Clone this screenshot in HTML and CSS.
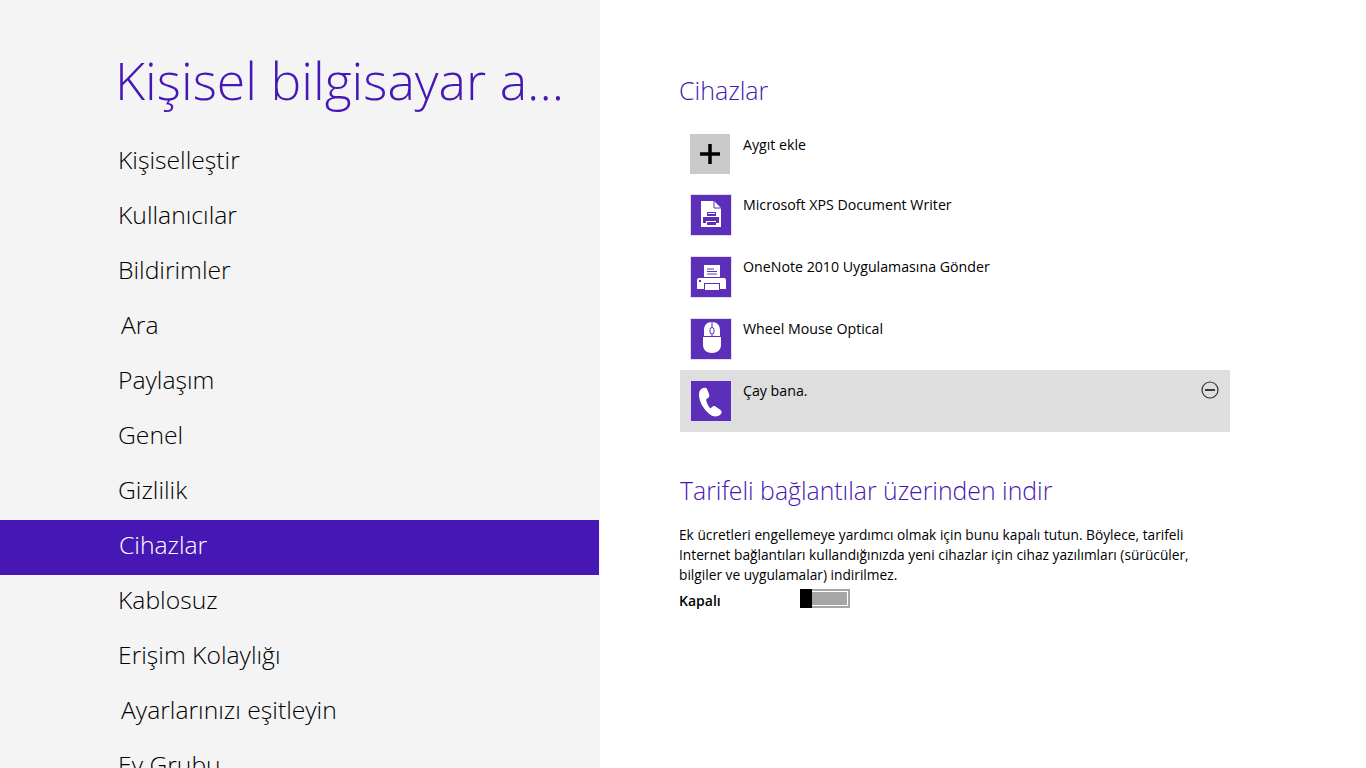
FILE: index.html
```html
<!DOCTYPE html>
<html lang="tr">
<head>
    <meta charset="UTF-8">
    <title>Bilgisayar ayarları</title>
    <link rel="stylesheet" href="styles.css">
</head>
<body>
    <!-- Left menu -->
    <nav class="sidebar">
        <h1 class="page-title">Kişisel bilgisayar a...</h1>
        <ul class="menu">
            <li>Kişiselleştir</li>
            <li>Kullanıcılar</li>
            <li>Bildirimler</li>
            <li class="indent">Ara</li>
            <li>Paylaşım</li>
            <li>Genel</li>
            <li>Gizlilik</li>
            <li class="active">Cihazlar</li>
            <li>Kablosuz</li>
            <li>Erişim Kolaylığı</li>
            <li class="indent">Ayarlarınızı eşitleyin</li>
            <li>Ev Grubu</li>
        </ul>
    </nav>

    <!-- Devices -->
    <main class="content">
        <h2 class="section-title">Cihazlar</h2>

        <div class="device add">
            <div class="tile tile-add">
                <svg width="40" height="40" viewBox="0 0 40 40"><path d="M20 10v20M10 20h20" stroke="#000" stroke-width="3.500" fill="none"/></svg>
            </div>
            <span class="device-name">Aygıt ekle</span>
        </div>

        <div class="device">
            <div class="tile">
                <svg width="40" height="40" viewBox="0 0 40 40">
                    <path d="M10 6h13l7 7v19h-20z" fill="#fff"/>
                    <path d="M23 6v7h7" fill="none" stroke="#5b2fb8" stroke-width="1"/>
                    <path d="M16 17h9v4h-9z M12 22h16v6h-3v-2h-10v2h-3z M16 27h9v3h-9z" fill="#5b2fb8"/>
                    <path d="M17 18h7v1h-7z" fill="#fff"/>
                </svg>
            </div>
            <span class="device-name">Microsoft XPS Document Writer</span>
        </div>

        <div class="device">
            <div class="tile">
                <svg width="40" height="40" viewBox="0 0 40 40">
                    <path d="M13 8h16v12h-16z" fill="#fff"/>
                    <path d="M16 12h7M16 14.500h10M16 17h10" stroke="#5b2fb8" stroke-width="1"/>
                    <path d="M8 21h25a2 2 0 0 1 2 2v9h-6v-6h-16v6h-7v-9a2 2 0 0 1 2-2z" fill="#fff"/>
                    <path d="M14 27h14v6h-14z" fill="#fff"/>
                    <path d="M8 23h2v2h-2z" fill="#5b2fb8"/>
                </svg>
            </div>
            <span class="device-name">OneNote 2010 Uygulamasına Gönder</span>
        </div>

        <div class="device">
            <div class="tile">
                <svg width="40" height="40" viewBox="0 0 40 40">
                    <path d="M21 3c-5 0-8 3-8 8v6h-1v9c0 5 4 8 9 8s9-3 9-8v-9h-1v-6c0-5-3-8-8-8z" fill="#fff"/>
                    <path d="M12 17.500h18M21 3v14" stroke="#5b2fb8" stroke-width="1" fill="none"/>
                    <rect x="19" y="8.500" width="4" height="6.500" rx="2" fill="#fff" stroke="#5b2fb8"/>
                </svg>
            </div>
            <span class="device-name">Wheel Mouse Optical</span>
        </div>

        <div class="device selected">
            <div class="tile">
                <svg width="40" height="40" viewBox="0 0 40 40">
                    <path d="M11 7.500c-2 1-3 3-3 6 0 8 5 15 11 20 3 2.500 8 2.500 10.500 0 1.500-1.500 1.500-3.500 0-4.500l-5-3.500c-1-.7-2.500-.5-3.500.5l-1.500 1.500c-2.500-2.500-4-6-4.500-9l2-1.500c1.500-1 1.500-2.500 1-4l-2-5c-.7-1.500-3-1.500-5-.500z" fill="#fff"/>
                </svg>
            </div>
            <span class="device-name">Çay bana.</span>
            <svg class="remove" width="18" height="18" viewBox="0 0 18 18">
                <circle cx="9" cy="9" r="8" fill="none" stroke="#333" stroke-width="1.200"/>
                <path d="M4 9h10" stroke="#000" stroke-width="1.500"/>
            </svg>
        </div>

        <h2 class="section-title metered">Tarifeli bağlantılar üzerinden indir</h2>
        <p class="description">Ek ücretleri engellemeye yardımcı olmak için bunu kapalı tutun. Böylece, tarifeli<br>Internet bağlantıları kullandığınızda yeni cihazlar için cihaz yazılımları (sürücüler,<br>bilgiler ve uygulamalar) indirilmez.</p>
        <div class="toggle-row">
            <span class="toggle-label">Kapalı</span>
            <div class="toggle"><div class="thumb"></div><div class="fill"></div></div>
        </div>
    </main>
</body>
</html>
```

FILE: styles.css
```css
/* General */
html, body {
    height: 768px;
    overflow: hidden;
}

body {
    margin: 0;
    display: flex;
    background: #fff;
    color: #000;
    font-family: 'Open Sans', 'Noto Sans', sans-serif;
}

/* Left menu */
.sidebar {
    width: 600px;
    height: 768px;
    flex-shrink: 0;
    overflow: hidden;
    background: #f4f4f5;
}

.page-title {
    margin: 0;
    height: 135px;
    padding: 46px 0 0 115px;
    box-sizing: border-box;
    font-size: 51.800px;
    line-height: 68px;
    font-weight: 300;
    color: #4617b4;
    white-space: nowrap;
}

.menu {
    margin: 0;
    padding: 0;
    list-style: none;
}

.menu li {
    width: 599px;
    height: 55px;
    padding-left: 118px;
    box-sizing: border-box;
    font-size: 24.700px;
    line-height: 50px;
    font-weight: 300;
    color: #000;
}

.menu li.indent {
    padding-left: 121px;
}

.menu li.active {
    padding-left: 119px;
    background: #4617b4;
    color: #fff;
}

/* Right side */
.content {
    flex: 1;
    padding: 72px 0 0 79px;
}

.section-title {
    margin: 0;
    font-size: 25px;
    line-height: 36px;
    font-weight: 300;
    color: #4617b4;
}

.device {
    width: 550px;
    height: 62px;
    margin-left: 1px;
    display: flex;
    padding: 11px 0 0 11px;
    box-sizing: border-box;
    position: relative;
}

.device.add {
    margin-top: 14px;
    padding-top: 12px;
}

.device.selected {
    background: #dedede;
}

.tile {
    width: 40px;
    height: 40px;
    background: #5b2fb8;
    outline: 1px solid #e4dcf5;
    flex-shrink: 0;
}

.tile svg {
    display: block;
}

.tile-add {
    margin: 0 1px 0 -1px;
    background: #c9c9c9;
    outline: none;
}

.device-name {
    margin-left: 12px;
    font-size: 14.200px;
    line-height: 19px;
    color: #000;
}

.add .device-name {
    margin-top: 1px;
}

.remove {
    position: absolute;
    top: 11px;
    right: 11px;
}

.section-title.metered {
    margin-top: 40px;
    padding-left: 1px;
    font-size: 24.800px;
}

.description {
    margin: 17px 0 0;
    font-size: 13.730px;
    line-height: 20px;
    color: #000;
}

.toggle-row {
    display: flex;
    align-items: center;
    margin-top: 3px;
    height: 20px;
}

.toggle-label {
    width: 121px;
    padding-top: 4px;
    font-size: 14px;
    font-weight: 600;
}

.toggle {
    width: 50px;
    height: 19px;
    display: flex;
    box-sizing: border-box;
    border: 2px solid #a6a6a6;
    border-left: none;
}

.thumb {
    width: 12px;
    height: 19px;
    margin-top: -2px;
    background: #000;
    flex-shrink: 0;
}

.fill {
    flex: 1;
    background: #a6a6a6;
    border: 1px solid #fff;
    border-left: none;
}
```
